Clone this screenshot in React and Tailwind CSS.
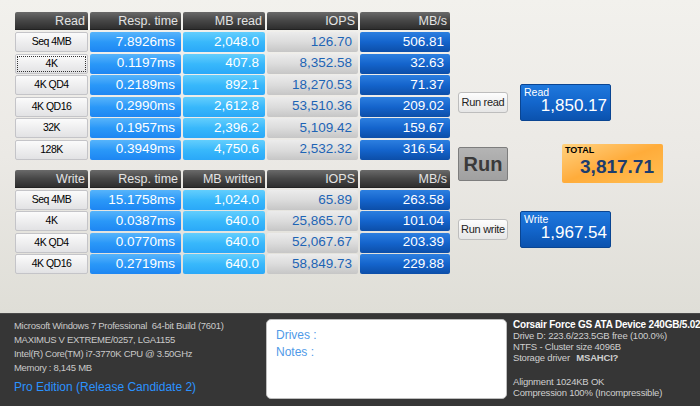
import React from "react";

const readRows = [
  ["Seq 4MB", "7.8926ms", "2,048.0", "126.70", "506.81"],
  ["4K", "0.1197ms", "407.8", "8,352.58", "32.63"],
  ["4K QD4", "0.2189ms", "892.1", "18,270.53", "71.37"],
  ["4K QD16", "0.2990ms", "2,612.8", "53,510.36", "209.02"],
  ["32K", "0.1957ms", "2,396.2", "5,109.42", "159.67"],
  ["128K", "0.3949ms", "4,750.6", "2,532.32", "316.54"],
];

const writeRows = [
  ["Seq 4MB", "15.1758ms", "1,024.0", "65.89", "263.58"],
  ["4K", "0.0387ms", "640.0", "25,865.70", "101.04"],
  ["4K QD4", "0.0770ms", "640.0", "52,067.67", "203.39"],
  ["4K QD16", "0.2719ms", "640.0", "58,849.73", "229.88"],
];

const arial = { fontFamily: '"Liberation Sans", Arial, sans-serif' };

function Header({ children }) {
  return (
    <div className="h-[18px] rounded-t-[2px] bg-gradient-to-b from-[#6a6a6a] via-[#474747] to-[#2e2e2e] text-[#e4e4e4] text-[12.5px] leading-[18px] text-right pr-[3px] border-b border-[#222]">
      {children}
    </div>
  );
}

function Label({ children, focused }) {
  return (
    <div
      className={
        "h-full rounded-[2px] bg-gradient-to-b from-[#fbfbfb] to-[#e2e2e4] border border-[#c4c4c8] text-black text-[10.5px] tracking-[-0.5px] flex items-center justify-center " +
        (focused ? "outline outline-1 outline-dotted outline-[#333] -outline-offset-[3px]" : "")
      }
    >
      {children}
    </div>
  );
}

function Cell({ kind, children }) {
  const styles = {
    resp: "bg-gradient-to-b from-[#56b4fb] via-[#2a98f8] to-[#1e86f2] text-white",
    mb: "bg-gradient-to-b from-[#62cefd] via-[#38b8fb] to-[#2aa8f8] text-white",
    iops: "bg-gradient-to-b from-[#ececec] via-[#dcdcdc] to-[#c6c6c6] text-[#1d64b5]",
    speed: "bg-gradient-to-b from-[#2c7fe0] via-[#1464cc] to-[#0c4ea8] text-white",
  };
  return (
    <div
      className={
        "h-full rounded-[2px] text-[13.5px] flex items-center justify-end pr-[6px] " +
        styles[kind]
      }
    >
      {children}
    </div>
  );
}

function Table({ heads, rows, rowGap }) {
  return (
    <div
      className="grid grid-cols-[73px_91px_82px_91px_90px] gap-x-[2px]"
      style={arial}
    >
      {heads.map((h) => (
        <Header key={h}>{h}</Header>
      ))}
      <div className="col-span-5 h-[2px]" />
      {rows.map((r, i) => (
        <React.Fragment key={r[0]}>
          <div className={"h-[20px] " + rowGap}>
            <Label focused={heads[0] === "Read" && i === 1}>{r[0]}</Label>
          </div>
          <div className={"h-[20px] " + rowGap}>
            <Cell kind="resp">{r[1]}</Cell>
          </div>
          <div className={"h-[20px] " + rowGap}>
            <Cell kind="mb">{r[2]}</Cell>
          </div>
          <div className={"h-[20px] " + rowGap}>
            <Cell kind="iops">{r[3]}</Cell>
          </div>
          <div className={"h-[20px] " + rowGap}>
            <Cell kind="speed">{r[4]}</Cell>
          </div>
        </React.Fragment>
      ))}
    </div>
  );
}

function SmallButton({ children }) {
  return (
    <div className="w-[50px] h-[21px] rounded-[3px] border border-[#bdbdbd] bg-gradient-to-b from-[#fdfdfd] to-[#e6e6e6] text-[11px] text-[#222] flex items-center justify-center tracking-[-0.3px]">
      {children}
    </div>
  );
}

function ScoreBox({ title, value }) {
  return (
    <div className="w-[91px] h-[37px] rounded-[2px] bg-gradient-to-b from-[#1f78dc] via-[#1366cc] to-[#0b52ae] border border-[#0a4592] text-white relative">
      <div className="absolute left-[3px] top-[1px] text-[10.5px] leading-[12px]">
        {title}
      </div>
      <div className="absolute right-[3px] bottom-[4px] text-[17px] leading-[20px]">
        {value}
      </div>
    </div>
  );
}

export default function App() {
  return (
    <div className="w-[700px] h-[406px] flex flex-col overflow-hidden" style={arial}>
      <div className="h-[313px] flex bg-gradient-to-b from-[#f2f1ed] via-[#ebe9e5] to-[#dfded7]">
        <div className="pl-[15px] pt-[12px] flex flex-col gap-[9px]">
          <Table
            heads={["Read", "Resp. time", "MB read", "IOPS", "MB/s"]}
            rows={readRows}
            rowGap="mb-[1.5px]"
          />
          <Table
            heads={["Write", "Resp. time", "MB written", "IOPS", "MB/s"]}
            rows={writeRows}
            rowGap="mb-[1.3px]"
          />
        </div>
        <div className="ml-[8px] pt-[84px] flex flex-col">
          <div className="flex items-center gap-[12px]">
            <SmallButton>Run read</SmallButton>
            <ScoreBox title="Read" value="1,850.17" />
          </div>
          <div className="mt-[23px] flex items-center gap-[54px]">
            <div className="w-[50px] h-[34px] rounded-[2px] border border-[#7d7d7d] bg-gradient-to-b from-[#b4b4b4] to-[#a0a0a0] text-[#3a3a3a] text-[20px] font-bold flex items-center justify-center">
              Run
            </div>
            <div className="w-[101px] h-[39px] rounded-[2px] bg-gradient-to-br from-[#ffd27e] via-[#ffac3a] to-[#ffbe52] relative">
              <div className="absolute left-[3px] top-[1px] text-[9px] font-bold text-black leading-[11px]">
                TOTAL
              </div>
              <div className="absolute right-[9px] bottom-[5px] text-[19px] font-bold text-[#1c3d6e] leading-[22px]">
                3,817.71
              </div>
            </div>
          </div>
          <div className="mt-[28px] flex items-center gap-[12px]">
            <SmallButton>Run write</SmallButton>
            <ScoreBox title="Write" value="1,967.54" />
          </div>
        </div>
      </div>
      <div className="flex-1 bg-[#363636] border-t border-[#4a4a4a] flex">
        <div className="w-[266px] pl-[14px] pt-[5px] text-[#c9c9c9] text-[9.5px] tracking-[-0.3px]">
          <div className="h-[14px] leading-[14px] whitespace-pre">Microsoft Windows 7 Professional  64-bit Build (7601)</div>
          <div className="h-[14px] leading-[14px]">MAXIMUS V EXTREME/0257, LGA1155</div>
          <div className="h-[14px] leading-[14px]">Intel(R) Core(TM) i7-3770K CPU @ 3.50GHz</div>
          <div className="h-[14px] leading-[14px]">Memory : 8,145 MB</div>
          <div className="mt-[4px] text-[12px] tracking-[0px] text-[#2b92ff] leading-[16px]">
            Pro Edition (Release Candidate 2)
          </div>
        </div>
        <div className="mt-[5px] w-[241px] h-[80px] rounded-[5px] bg-white border border-[#bdbdbd] pl-[9px] pt-[7px] text-[#4f9ae8] text-[12px] leading-[17px]">
          <div>Drives :</div>
          <div>Notes :</div>
        </div>
        <div className="flex-1 pl-[6px] pt-[5px] text-[#cfcfcf] text-[9.5px] leading-[11px] whitespace-nowrap overflow-hidden tracking-[-0.2px]">
          <div className="font-bold text-white text-[10px]">Corsair Force GS ATA Device 240GB/5.02</div>
          <div>Drive D: 223.6/223.5GB free (100.0%)</div>
          <div>NTFS - Cluster size 4096B</div>
          <div>
            Storage driver <span className="font-bold ml-[4px]">MSAHCI?</span>
          </div>
          <div className="h-[13px]" />
          <div>Alignment 1024KB OK</div>
          <div>Compression 100% (Incompressible)</div>
        </div>
      </div>
    </div>
  );
}
